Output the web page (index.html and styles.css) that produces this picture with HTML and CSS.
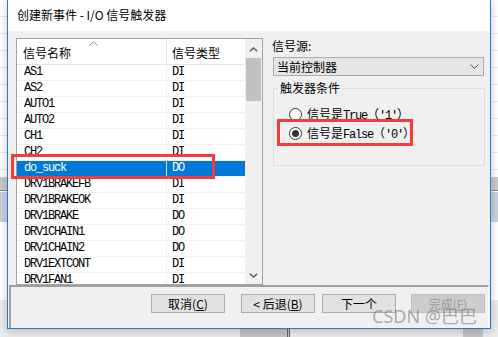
FILE: index.html
```html
<!DOCTYPE html>
<html lang="zh-CN">
<head>
<meta charset="utf-8">
<title>创建新事件 - I/O 信号触发器</title>
<link rel="stylesheet" href="styles.css">
</head>
<body>
<div class="desk">
  <div class="desk-grid"></div>
  <div class="desk-band"></div>
  <div class="desk-blue"></div>
  <div class="desk-bottom"></div>
  <div class="desk-block1"></div>
  <div class="desk-block2"></div>
</div>

<div class="dialog">
  <div class="titlebar">创建新事件 - I/O 信号触发器</div>
  <div class="dbody">
    <div class="main">
      <div class="list">
        <div class="cols">
          <div class="head">
            <div class="hc1">信号名称
              <svg class="sort" width="9" height="5" viewBox="0 0 9 5"><polyline points="0.5,4.5 4.5,0.8 8.5,4.5" fill="none" stroke="#8a8a8a" stroke-width="1"/></svg>
            </div>
            <div class="hc2">信号类型</div>
          </div>
          <div class="row"><span class="r1 m">AS1</span><span class="r2 m">DI</span></div>
          <div class="row"><span class="r1 m">AS2</span><span class="r2 m">DI</span></div>
          <div class="row"><span class="r1 m">AUTO1</span><span class="r2 m">DI</span></div>
          <div class="row"><span class="r1 m">AUTO2</span><span class="r2 m">DI</span></div>
          <div class="row"><span class="r1 m">CH1</span><span class="r2 m">DI</span></div>
          <div class="row"><span class="r1 m">CH2</span><span class="r2 m">DI</span></div>
          <div class="row sel"><span class="r1 m">do_suck</span><span class="r2 m">DO</span></div>
          <div class="row"><span class="r1 m">DRV1BRAKEFB</span><span class="r2 m">DI</span></div>
          <div class="row"><span class="r1 m">DRV1BRAKEOK</span><span class="r2 m">DI</span></div>
          <div class="row"><span class="r1 m">DRV1BRAKE</span><span class="r2 m">DO</span></div>
          <div class="row"><span class="r1 m">DRV1CHAIN1</span><span class="r2 m">DO</span></div>
          <div class="row"><span class="r1 m">DRV1CHAIN2</span><span class="r2 m">DO</span></div>
          <div class="row"><span class="r1 m">DRV1EXTCONT</span><span class="r2 m">DI</span></div>
          <div class="row"><span class="r1 m">DRV1FAN1</span><span class="r2 m">DI</span></div>
        </div>
        <div class="sb">
          <div class="sb-up"><svg width="9" height="5" viewBox="0 0 9 5"><polyline points="0.8,4.3 4.5,0.9 8.2,4.3" fill="none" stroke="#606060" stroke-width="1.5"/></svg></div>
          <div class="thumb"></div>
          <div class="sb-fill"></div>
          <div class="sb-down"><svg width="9" height="5" viewBox="0 0 9 5"><polyline points="0.8,0.7 4.5,4.1 8.2,0.7" fill="none" stroke="#606060" stroke-width="1.5"/></svg></div>
        </div>
      </div>

      <div class="side">
        <div class="lbl">信号源:</div>
        <div class="combo">
          <span>当前控制器</span>
          <svg width="9" height="5" viewBox="0 0 9 5"><polyline points="0.5,0.5 4.5,4.3 8.5,0.5" fill="none" stroke="#505050" stroke-width="1"/></svg>
        </div>
        <fieldset class="group">
          <legend>触发器条件</legend>
          <div class="radio"><span class="rb"></span><span>信号是<span class="m">True</span>（<span class="m">′1′</span>）</span></div>
          <div class="radio"><span class="rb on"><span class="dot"></span></span><span>信号是<span class="m">False</span>（<span class="m">′0′</span>）</span></div>
        </fieldset>
      </div>
    </div>

    <div class="footer">
      <button class="btn">取消(<u>C</u>)</button>
      <button class="btn b-back">&lt; 后退(<u>B</u>)</button>
      <button class="btn b-next">下一个</button>
      <button class="btn b-fin" disabled>完成(<u>F</u>)</button>
    </div>
  </div>
</div>

<div class="hl hl1"></div>
<div class="hl hl2"></div>
<div class="watermark">CSDN @巴巴</div>
</body>
</html>
```
FILE: styles.css
```css
* { box-sizing: border-box; }
html, body { margin: 0; padding: 0; }
body {
  width: 498px;
  height: 337px;
  overflow: hidden;
  position: relative;
  background: #fff;
  font: 12px/16px "Noto Sans CJK SC", "Microsoft YaHei", sans-serif;
  color: #000;
}

/* desktop underneath */
.desk { position: absolute; left: 0; top: 0; width: 498px; height: 337px; }
.desk-grid {
  position: absolute; left: 0; top: 0; width: 498px; height: 176px;
  background: repeating-linear-gradient(to bottom, #fff 0, #fff 16px, #e9e9e9 16px, #e9e9e9 17px);
}
.desk-band { position: absolute; left: 0; top: 177px; width: 498px; height: 14px; background: #c9c9c9; border-bottom: 1px solid #8a8a8a; }
.desk-blue { position: absolute; left: 0; top: 192px; width: 498px; height: 30px; background: #c8d2de; }
.desk-bottom { position: absolute; left: 0; top: 300px; width: 498px; height: 37px; background: #ebebeb; }
.desk-block1 { position: absolute; left: 240px; top: 329px; width: 50px; height: 8px; background: #c6c6c6; border-right: 3px double #6a6a6a; }
.desk-block2 { position: absolute; left: 463px; top: 329px; width: 20px; height: 8px; background: #c6c6c6; }

/* dialog window */
.dialog {
  position: absolute;
  left: 7px;
  top: -1px;
  width: 484px;
  height: 330px;
  border: 1px solid #1a7fd4;
  background: #f0f0f0;
  display: flex;
  flex-direction: column;
  box-shadow: 0 2px 9px rgba(0, 0, 0, 0.22);
}
.titlebar {
  height: 31px;
  background: #fff;
  padding: 7px 0 0 9px;
  line-height: 16px;
  white-space: nowrap;
}
.dbody {
  flex: 1;
  display: flex;
  flex-direction: column;
  padding-top: 7px;
}
.main {
  display: flex;
  gap: 9px;
  margin-left: 8px;
  height: 247px;
}

/* list view */
.list {
  width: 247px;
  height: 247px;
  border: 1px solid #a0a0a0;
  background: #fff;
  display: flex;
}
.cols {
  width: 228px;
  display: flex;
  flex-direction: column;
  overflow: hidden;
}
.head {
  height: 26px;
  flex-shrink: 0;
  display: flex;
  border-bottom: 1px solid #e5e5e5;
}
.hc1 {
  width: 150px;
  border-right: 1px solid #e5e5e5;
  padding: 6px 0 0 6px;
  position: relative;
}
.hc2 { flex: 1; padding: 6px 0 0 5px; }
.sort { position: absolute; left: 72px; top: 2px; }

.m {
  font-family: "Liberation Mono", "DejaVu Sans Mono", monospace;
  font-size: 12px;
  letter-spacing: -1.2px;
}
.row {
  height: 16px;
  flex-shrink: 0;
  display: flex;
  border-bottom: 1px solid #f0f0f0;
  line-height: 15px;
  white-space: nowrap;
}
.r1 { width: 150px; border-right: 1px solid #f0f0f0; padding-left: 7px; }
.r2 { flex: 1; padding-left: 5px; }
.row.sel { background: #0078d7; color: #fff; }
.row.sel .r1 { border-right-color: #d8e6f3; }

.sb {
  width: 17px;
  background: #f0f0f0;
  display: flex;
  flex-direction: column;
  align-items: center;
}
.sb-up { height: 19px; width: 17px; display: flex; justify-content: center; padding-top: 8px; }
.sb-up svg, .sb-down svg { display: block; }
.thumb { width: 15px; height: 43px; background: #c1c1c1; }
.sb-fill { flex: 1; }
.sb-down { height: 17px; width: 17px; display: flex; justify-content: center; align-items: center; }

/* right side */
.side { width: 214px; }
.lbl { height: 16px; }
.combo {
  margin: 3px 0 0 1px;
  width: 211px;
  height: 19px;
  border: 1px solid #acacac;
  background: #e5e5e5;
  display: flex;
  align-items: center;
  justify-content: space-between;
  padding: 0 4px 0 3px;
  line-height: 16px;
}
.combo svg { display: block; }
.group {
  margin: 4px 0 0 1px;
  width: 212px;
  border: 1px solid #dcdcdc;
  padding: 9px 0 22px 0;
  min-width: 0;
}
.group legend {
  margin-left: 4px;
  padding: 0 2px;
  line-height: 16px;
}
.radio {
  height: 19px;
  display: flex;
  align-items: center;
  padding-left: 15px;
  gap: 5px;
  white-space: nowrap;
}
.rb {
  width: 13px;
  height: 13px;
  border: 1px solid #333;
  border-radius: 50%;
  background: #fff;
  display: flex;
  align-items: center;
  justify-content: center;
  flex-shrink: 0;
}
.dot { width: 7px; height: 7px; border-radius: 50%; background: #333; }

/* footer buttons */
.footer {
  flex: 1;
  margin-left: 1px;
  width: 480px;
  border-top: 2px solid #a0a0a0;
  border-left: 2px solid #a0a0a0;
  border-right: 1px solid #fdfdfd;
  display: flex;
  justify-content: flex-end;
  align-items: flex-start;
  padding: 7px 3px 0 0;
}
.btn {
  width: 74px;
  height: 19px;
  margin: 0;
  padding: 0;
  border: 1px solid #adadad;
  background: #e1e1e1;
  font: 12px/16px "Noto Sans CJK SC", "Microsoft YaHei", sans-serif;
  color: #000;
}
.b-back { margin-left: 16px; }
.b-next { margin-left: 7px; }
.b-fin { margin-left: 15px; background: #cccccc; border-color: #bfbfbf; color: #9a9a9a; }

/* annotation overlays */
.hl { position: absolute; border: 3px solid #f63b3b; }
.hl1 { left: 11px; top: 154px; width: 204px; height: 25px; }
.hl2 { left: 277px; top: 119px; width: 136px; height: 27px; }

.watermark {
  position: absolute;
  left: 372px;
  top: 305px;
  font: 18px/22px "Noto Sans", "Noto Sans CJK SC", sans-serif;
  color: rgba(110, 110, 110, 0.55);
  white-space: nowrap;
}
```
